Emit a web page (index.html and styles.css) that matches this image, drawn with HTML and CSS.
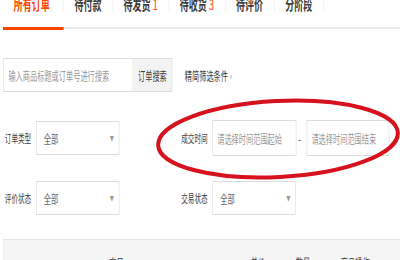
FILE: index.html
```html
<!DOCTYPE html>
<html lang="zh-CN">
<head>
    <meta charset="UTF-8">
    <meta name="viewport" content="width=device-width, initial-scale=1.0">
    <title>已买到的宝贝</title>
    <link rel="stylesheet" href="styles.css">
</head>
<body>
    <div class="page">
        <ul class="tabs">
            <li class="tab active"><a>所有订单</a></li>
            <li class="tab"><a>待付款</a></li>
            <li class="tab"><a>待发货 <em>1</em></a></li>
            <li class="tab"><a>待收货 <em>3</em></a></li>
            <li class="tab"><a>待评价</a></li>
            <li class="tab"><a>分阶段</a></li>
        </ul>

        <div class="search-row">
            <input class="search-input" type="text" placeholder="输入商品标题或订单号进行搜索">
            <button class="search-btn">订单搜索</button>
            <span class="filter-toggle">精简筛选条件<span class="caret">^</span></span>
        </div>

        <div class="filter-row">
            <div class="field">
                <label>订单类型</label>
                <div class="select">全部<span class="arrow">▼</span></div>
            </div>
            <div class="field field-second">
                <label>成交时间</label>
                <input class="date" type="text" placeholder="请选择时间范围起始">
                <span class="dash">-</span>
                <input class="date date-end" type="text" placeholder="请选择时间范围结束">
            </div>
        </div>

        <div class="filter-row filter-row-last">
            <div class="field">
                <label>评价状态</label>
                <div class="select">全部<span class="arrow">▼</span></div>
            </div>
            <div class="field field-second">
                <label>交易状态</label>
                <div class="select">全部<span class="arrow">▼</span></div>
            </div>
        </div>

        <div class="table-head">
            <span class="col-item">宝贝</span>
            <span>单价</span>
            <span>数量</span>
            <span>商品操作</span>
        </div>
    </div>

    <!-- 红色圈注 -->
    <svg class="highlight" width="400" height="260" viewBox="0 0 400 260">
        <ellipse cx="278" cy="139" rx="120" ry="38" transform="rotate(-3 278 139)"
                 fill="none" stroke="#d6121f" stroke-width="4"/>
    </svg>
</body>
</html>
```

FILE: styles.css
```css
html, body {
    margin: 0;
    overflow: hidden;
    background-color: #fff;
}
body {
    font-family: "Noto Sans CJK SC", "Noto Sans", sans-serif;
    font-size: 12px;
    color: #3c3c3c;
    position: relative;
}
.page {
    width: 665px;
    padding-left: 5px;
    transform: scaleX(0.6);
    transform-origin: 0 0;
}

.tabs {
    list-style: none;
    display: flex;
    margin: -4px 0 0;
    padding: 0;
    border-bottom: 2px solid #e8e8e8;
}
.tab {
    padding-bottom: 16px;
    margin-bottom: -3px;
    border-bottom: 3px solid transparent;
}
.tab a {
    display: block;
    padding: 0 18px;
    line-height: 15px;
    font-size: 15px;
    font-weight: bold;
    border-right: 1px solid #ececec;
}
.tab em {
    font-style: normal;
    font-weight: normal;
    color: #ff4400;
}
.tab.active {
    border-bottom-color: #ff4400;
}
.tab.active a {
    color: #ff4400;
    padding-right: 22px;
}

.search-row {
    display: flex;
    align-items: center;
    margin-top: 29px;
}
.search-input {
    box-sizing: border-box;
    width: 217px;
    height: 34px;
    padding: 0 8px;
    border: 1px solid #dcdcdc;
    font-family: inherit;
    font-size: 12px;
    outline: none;
}
.search-input::placeholder,
.date::placeholder {
    color: #9a9a9a;
}
.search-btn {
    box-sizing: border-box;
    width: 65px;
    height: 34px;
    border: 1px solid #dcdcdc;
    border-left: none;
    background-color: #f3f3f3;
    font-family: inherit;
    font-size: 12px;
    color: #3c3c3c;
    padding: 0;
}
.filter-toggle {
    margin-left: 21px;
}
.caret {
    font-size: 8px;
    color: #999;
    margin-left: 3px;
}

.filter-row {
    display: flex;
    align-items: center;
    margin-top: 28px;
}
.filter-row-last {
    margin-top: 25px;
}
.field {
    display: flex;
    align-items: center;
    gap: 8px;
}
.field label {
    width: 47px;
    text-align: right;
    font-size: 11px;
}
.field-second {
    margin-left: 100px;
}
.select {
    box-sizing: border-box;
    width: 139px;
    height: 34px;
    padding: 0 8px 0 12px;
    border: 1px solid #dcdcdc;
    display: flex;
    align-items: center;
    justify-content: space-between;
    color: #666;
}
.arrow {
    font-size: 7px;
    color: #999;
}
.date {
    box-sizing: border-box;
    width: 140px;
    height: 36px;
    padding: 0 7px;
    border: 1px solid #dcdcdc;
    font-family: inherit;
    font-size: 12px;
    outline: none;
}
.date-end {
    width: 138px;
}
.dash {
    width: 10px;
    margin-left: -8px;
    margin-right: -1px;
    text-align: center;
    color: #333;
}

.table-head {
    display: grid;
    grid-template-columns: 376px 75px 75px 1fr;
    margin-top: 24px;
    padding-top: 14px;
    height: 30px;
    border-top: 1px solid #e6e6e6;
    border-left: 1px solid #e6e6e6;
    background-color: #f5f5f5;
    color: #3c3c3c;
}
.table-head span {
    padding-left: 36px;
    line-height: 18px;
}
.table-head .col-item {
    padding-left: 0;
    text-align: center;
}

.highlight {
    position: absolute;
    left: 0;
    top: 0;
    pointer-events: none;
}
```
